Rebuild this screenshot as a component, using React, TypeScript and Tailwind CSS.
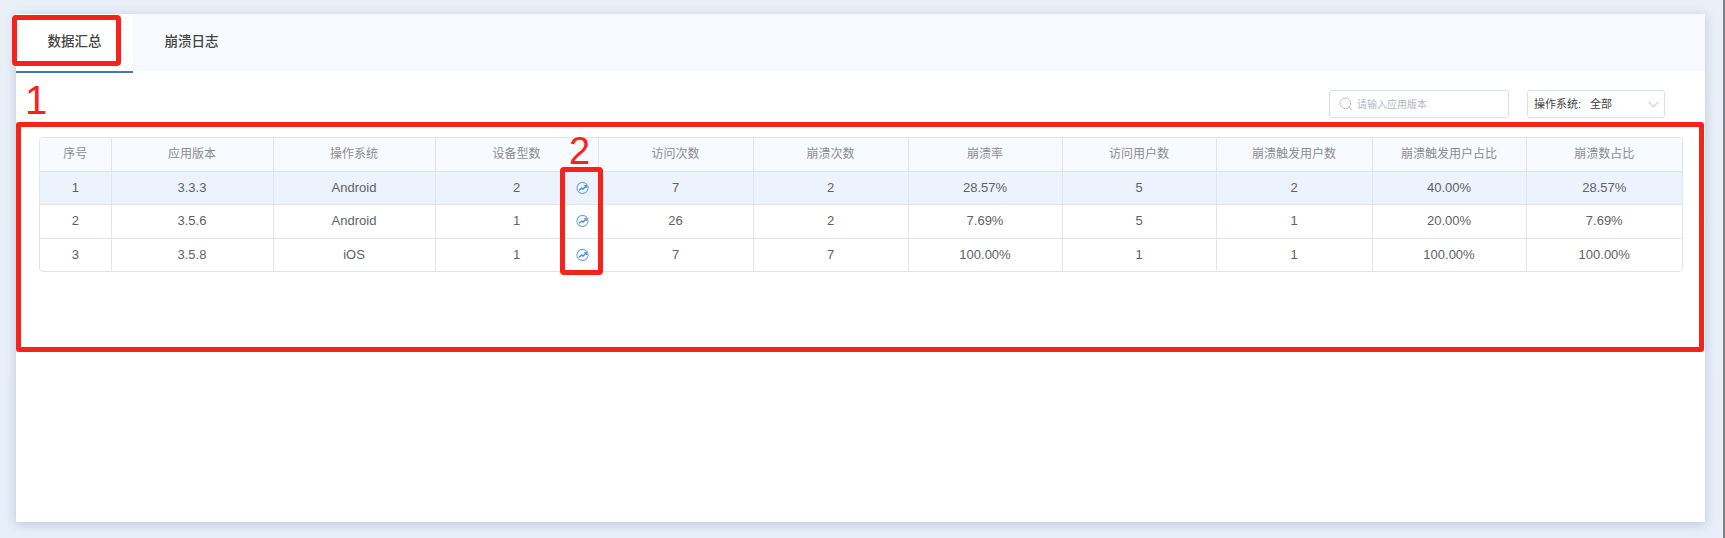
import { Search, ChevronDown } from "lucide-react";

const columns = [
  { title: "序号", width: "w-[71px]" },
  { title: "应用版本", width: "w-[162px]" },
  { title: "操作系统", width: "w-[162px]" },
  { title: "设备型数", width: "w-[163px]" },
  { title: "访问次数", width: "w-[155px]" },
  { title: "崩溃次数", width: "w-[155px]" },
  { title: "崩溃率", width: "w-[154px]" },
  { title: "访问用户数", width: "w-[154px]" },
  { title: "崩溃触发用户数", width: "w-[156px]" },
  { title: "崩溃触发用户占比", width: "w-[154px]" },
  { title: "崩溃数占比", width: "w-[156px]" },
];

const rows = [
  ["1", "3.3.3", "Android", "2", "7", "2", "28.57%", "5", "2", "40.00%", "28.57%"],
  ["2", "3.5.6", "Android", "1", "26", "2", "7.69%", "5", "1", "20.00%", "7.69%"],
  ["3", "3.5.8", "iOS", "1", "7", "7", "100.00%", "1", "1", "100.00%", "100.00%"],
];

const TrendIcon = () => (
  <svg width="13" height="13" viewBox="0 0 13 13" fill="none" className="absolute right-[9px] top-1/2 -translate-y-1/2">
    <circle cx="6.5" cy="6.5" r="5.6" stroke="#6ea4de" strokeWidth="1.1" />
    <path d="M3 8.8 L5.6 6.6 L7 7.6 L10 4.8" stroke="#4d8fd8" strokeWidth="1.5" />
    <path d="M7.8 4.2 H10.4 V6.4" stroke="#4d8fd8" strokeWidth="1.1" />
  </svg>
);

export default function App() {
  return (
    <div className="relative h-[538px] w-full overflow-hidden border-r-2 border-[#808080] bg-gradient-to-b from-[#eaf0f8] to-[#e7effa] pl-4 pt-[14px] font-['Liberation_Sans','Noto_Sans_CJK_SC',sans-serif]">
      <div className="h-[508px] w-[1689px] bg-white shadow-[0_2px_10px_rgba(120,135,165,0.4)]">
        <div className="flex h-[57px] items-start bg-[#f7f9fe]">
          <div className="flex h-[59px] w-[117px] items-center justify-center border-b-2 border-[#3f7ab5] bg-white text-[13.5px] font-medium text-[#444]">
            数据汇总
          </div>
          <div className="flex h-[57px] w-[117px] items-center justify-center text-[13.5px] font-medium text-[#444]">
            崩溃日志
          </div>
        </div>

        <div className="flex justify-end pr-10 pt-[19px]">
          <div className="mr-[18px] flex h-[28px] w-[180px] items-center rounded-[3px] border border-[#d9e0ea] pl-2 text-[10px] text-[#b4b8bf]">
            <Search size={16} strokeWidth={1.1} className="mr-[3px] text-[#a9adb5]" />
            请输入应用版本
          </div>
          <div className="flex h-[28px] w-[138px] items-center rounded-[3px] border border-[#d9e0ea] pl-1.5 pr-[1px] text-[11px] text-[#444]">
            <span>操作系统:</span>
            <span className="ml-[9px]">全部</span>
            <ChevronDown size={19} strokeWidth={0.9} className="ml-auto text-[#9a9ea6]" />
          </div>
        </div>

        <div className="ml-[23px] mt-[19px] w-[1644px] overflow-hidden rounded-[4px] border border-[#dfe5ec]">
          <table className="w-full table-fixed border-collapse">
            <thead>
              <tr className="h-[33px] bg-[#f7faff]">
                {columns.map((col) => (
                  <th
                    key={col.title}
                    className={`${col.width} border-b border-l border-[#dfe5ec] text-center text-[12px] font-normal text-[#8c8c8c] first:border-l-0`}
                  >
                    {col.title}
                  </th>
                ))}
              </tr>
            </thead>
            <tbody>
              {rows.map((row, i) => (
                <tr key={row[0]} className={i === 0 ? "h-[33px] bg-[#ecf3fc]" : i === 1 ? "h-[34px]" : "h-[33px]"}>
                  {row.map((cell, j) => (
                    <td
                      key={j}
                      className={`relative border-l border-[#dfe5ec] text-center text-[13px] text-[#606266] first:border-l-0 ${i < 2 ? "border-b" : ""}`}
                    >
                      {cell}
                      {j === 3 && <TrendIcon />}
                    </td>
                  ))}
                </tr>
              ))}
            </tbody>
          </table>
        </div>
      </div>

      {/* red annotations drawn on the screenshot */}
      <div className="absolute left-[12px] top-[15px] h-[51px] w-[109px] rounded-[4px] border-[5px] border-[#f5231a]" />
      <div className="absolute left-[16px] top-[122px] h-[230px] w-[1688px] rounded-[3px] border-[5px] border-[#f5231a]" />
      <div className="absolute left-[560px] top-[167px] h-[108px] w-[43px] rounded-[4px] border-[5px] border-[#f5231a]" />
      <div className="absolute left-[25px] top-[77px] font-['Liberation_Sans',sans-serif] text-[40px] leading-[46px] text-[#f5231a]">1</div>
      <div className="absolute left-[569px] top-[128px] font-['Liberation_Sans',sans-serif] text-[38px] leading-[46px] text-[#f5231a]">2</div>
    </div>
  );
}
